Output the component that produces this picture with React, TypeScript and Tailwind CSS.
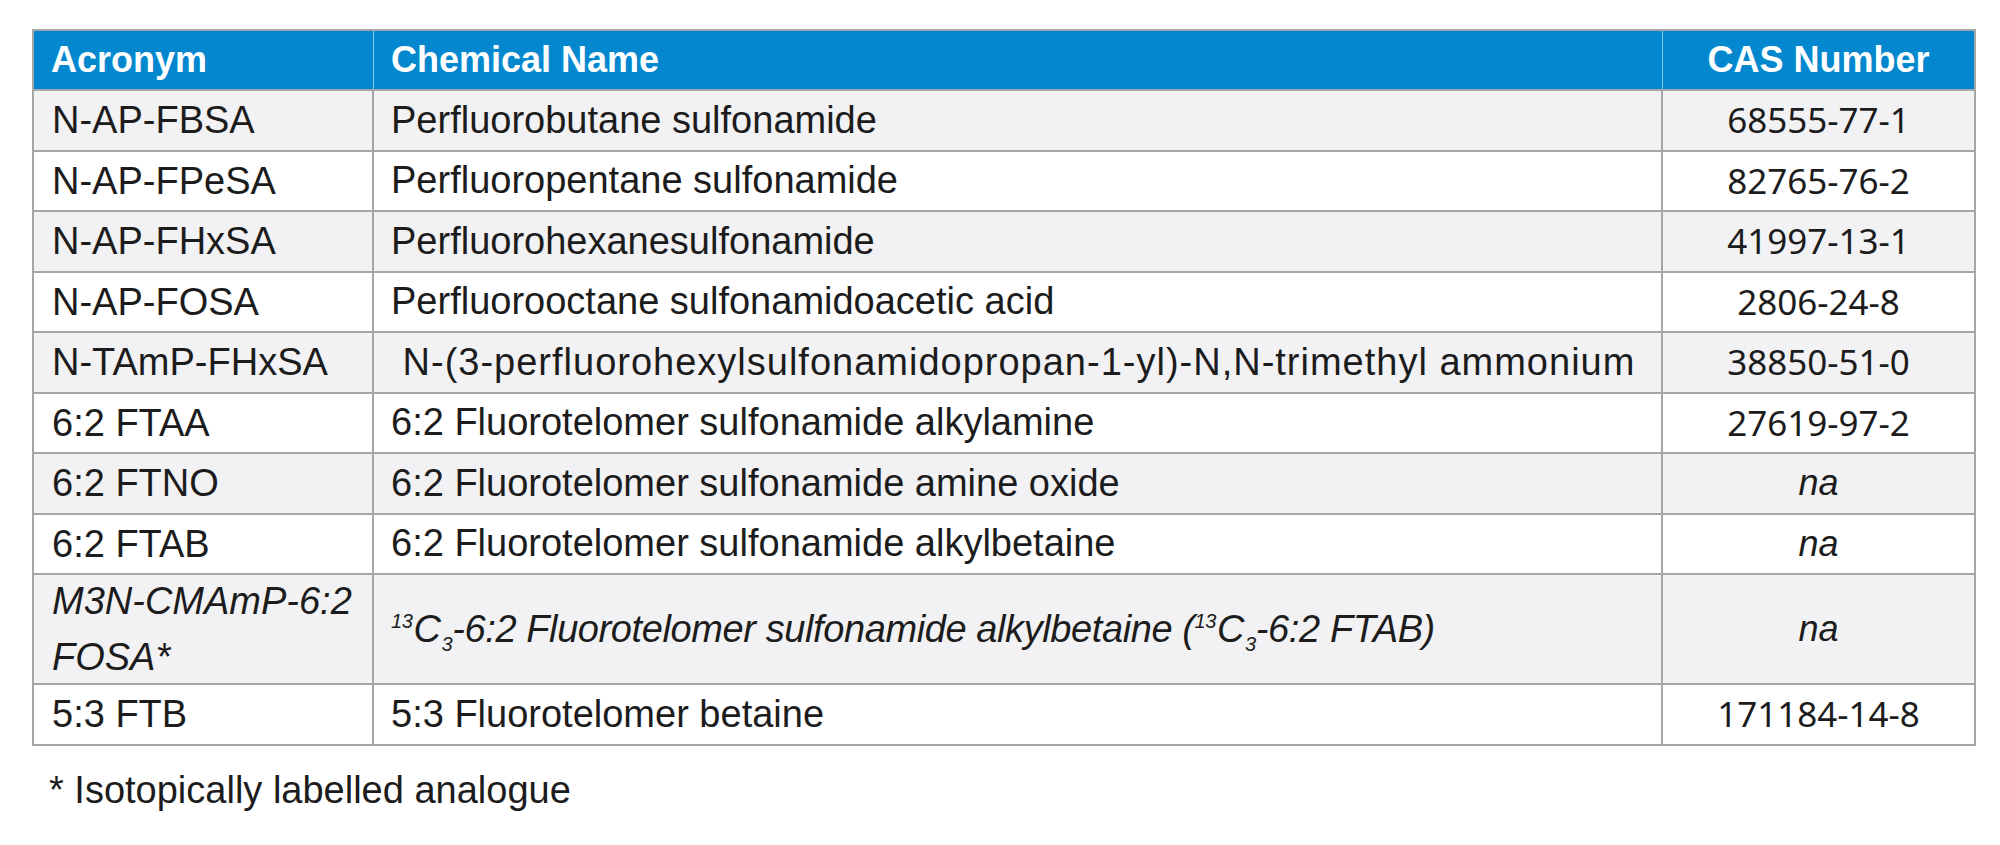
import React from "react";

type Row = {
  acronym: React.ReactNode;
  name: React.ReactNode;
  cas: React.ReactNode;
  tall?: boolean;
  wide?: boolean;
};

const na = <span className="italic font-['Liberation_Sans',Arial,sans-serif] text-[36px]">na</span>;

const Sup = ({ children }: { children: React.ReactNode }) => (
  <sup className="text-[20px] top-[-0.7em] mr-[1px]">{children}</sup>
);
const Sub = ({ children }: { children: React.ReactNode }) => (
  <sub className="text-[20px] bottom-[-0.45em] ml-[1px]">{children}</sub>
);

const ROWS: Row[] = [
  { acronym: "N-AP-FBSA", name: "Perfluorobutane sulfonamide", cas: "68555-77-1" },
  { acronym: "N-AP-FPeSA", name: "Perfluoropentane sulfonamide", cas: "82765-76-2" },
  { acronym: "N-AP-FHxSA", name: "Perfluorohexanesulfonamide", cas: "41997-13-1" },
  { acronym: "N-AP-FOSA", name: "Perfluorooctane sulfonamidoacetic acid", cas: "2806-24-8" },
  {
    acronym: "N-TAmP-FHxSA",
    name: "\u00a0N-(3-perfluorohexylsulfonamidopropan-1-yl)-N,N-trimethyl ammonium",
    cas: "38850-51-0",
    wide: true,
  },
  { acronym: "6:2 FTAA", name: "6:2 Fluorotelomer sulfonamide alkylamine", cas: "27619-97-2" },
  { acronym: "6:2 FTNO", name: "6:2 Fluorotelomer sulfonamide amine oxide", cas: na },
  { acronym: "6:2 FTAB", name: "6:2 Fluorotelomer sulfonamide alkylbetaine", cas: na },
  {
    acronym: <span className="italic">M3N-CMAmP-6:2 FOSA*</span>,
    name: (
      <span className="italic tracking-[-0.4px]">
        <Sup>13</Sup>C<Sub>3</Sub>-6:2 Fluorotelomer sulfonamide alkylbetaine (<Sup>13</Sup>C<Sub>3</Sub>-6:2 FTAB)
      </span>
    ),
    cas: na,
    tall: true,
  },
  { acronym: "5:3 FTB", name: "5:3 Fluorotelomer betaine", cas: "171184-14-8" },
];

export default function App() {
  return (
    <div className="w-[2000px] h-[845px] bg-white text-[#1c1c1c] font-['Liberation_Sans',Arial,sans-serif]">
      <div className="pt-[29px] pl-[32px]">
        {/* Table */}
        <div className="w-[1944px] border-2 border-[#a6a6a6]">
          <div className="flex h-[58px] bg-[#0388d0] text-white font-bold text-[36px]">
            <div className="w-[340px] flex items-center pl-[17px] border-r border-[#8cc6e8]">Acronym</div>
            <div className="w-[1289px] flex items-center pl-[17px] border-r border-[#8cc6e8]">Chemical Name</div>
            <div className="flex-1 flex items-center justify-center">CAS Number</div>
          </div>
          {ROWS.map((row, i) => (
            <div
              key={i}
              className={`flex border-t-2 border-[#a6a6a6] text-[38px] ${
                row.tall ? "h-[110px]" : "h-[60.5px]"
              } ${i % 2 === 0 ? "bg-[#f2f2f4]" : "bg-white"}`}
            >
              <div className="w-[340px] shrink-0 flex items-center pl-[18px] pr-[8px] border-r-2 border-[#a6a6a6] leading-[56px]">
                {row.acronym}
              </div>
              <div
                className={`w-[1289px] shrink-0 flex items-center pl-[17px] border-r-2 border-[#a6a6a6] whitespace-nowrap ${
                  row.wide ? "tracking-[1px]" : ""
                }`}
              >
                {row.name}
              </div>
              <div className="flex-1 flex items-center justify-center text-[35px] font-['Noto_Sans',sans-serif]">
                {row.cas}
              </div>
            </div>
          ))}
        </div>

        {/* Footnote */}
        <p className="mt-[22px] pl-[17px] text-[38px] leading-[44px]">* Isotopically labelled analogue</p>
      </div>
    </div>
  );
}
